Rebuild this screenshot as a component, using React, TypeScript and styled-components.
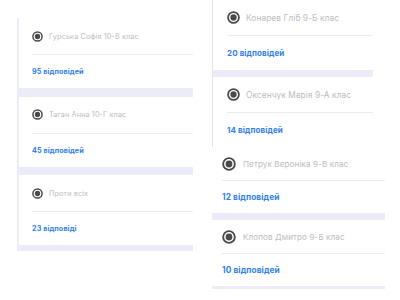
import React from "react";
import styled, { createGlobalStyle } from "styled-components";

const GlobalStyle = createGlobalStyle`
  html, body { margin: 0; padding: 0; background: #ffffff; }
  body { font-family: Inter, "Noto Sans", sans-serif; }
`;

const LAVENDER = "#ecebf8";

const Page = styled.div`
  width: 400px;
  height: 300px;
  overflow: hidden;
  display: flex;
  align-items: flex-start;
  background: #fff;
`;

const LeftColumn = styled.div`
  margin: 18px 0 0 17px;
  width: 176px;
  padding: 0 0 6px 2px;
  box-sizing: border-box;
  background: ${LAVENDER};
  display: flex;
  flex-direction: column;
  gap: 8.5px;
`;

const RightColumn = styled.div`
  margin: 0 0 0 19px;
  display: flex;
  flex-direction: column;
`;

const Panel = styled.div<{ $width: number; $pb: number; $border?: boolean }>`
  width: ${(p) => p.$width}px;
  box-sizing: border-box;
  background: ${LAVENDER};
  padding-bottom: ${(p) => p.$pb}px;
  border-left: ${(p) => (p.$border ? "1px solid #e2e1ea" : "none")};
  display: flex;
  flex-direction: column;
  gap: 7px;
`;

const Card = styled.div<{ $h: number; $inset: number }>`
  height: ${(p) => p.$h}px;
  background: #fff;
  padding-left: ${(p) => p.$inset}px;
  display: flex;
  flex-direction: column;
`;

const Header = styled.div<{ $h: number; $gap: number }>`
  height: ${(p) => p.$h}px;
  display: flex;
  align-items: center;
  gap: ${(p) => p.$gap}px;
`;

const Name = styled.span<{ $fs: number }>`
  font-size: ${(p) => p.$fs}px;
  color: #bcbcbc;
  white-space: nowrap;
  letter-spacing: 0.1px;
`;

const Divider = styled.div`
  height: 1px;
  background: #ebebeb;
`;

const Footer = styled.div`
  flex: 1;
  display: flex;
  align-items: center;
`;

const Count = styled.span<{ $fs: number }>`
  font-size: ${(p) => p.$fs}px;
  font-weight: 700;
  color: #2f7fe6;
  white-space: nowrap;
  letter-spacing: 0.1px;
`;

const Radio = ({ size }: { size: number }) => (
  <svg width={size} height={size} viewBox="0 0 12 12" style={{ flex: "none" }}>
    <circle cx="6" cy="6" r="5" fill="none" stroke="#4a4a4a" strokeWidth="1.6" />
    <circle cx="6" cy="6" r="2.9" fill="#4a4a4a" />
  </svg>
);

type Item = { name: string; count: string };

type Variant = {
  h: number;
  headerH: number;
  inset: number;
  radio: number;
  gap: number;
  nameFs: number;
  countFs: number;
};

const Option = ({ item, v }: { item: Item; v: Variant }) => (
  <Card $h={v.h} $inset={v.inset}>
    <Header $h={v.headerH} $gap={v.gap}>
      <Radio size={v.radio} />
      <Name $fs={v.nameFs}>{item.name}</Name>
    </Header>
    <Divider />
    <Footer>
      <Count $fs={v.countFs}>{item.count}</Count>
    </Footer>
  </Card>
);

const leftV: Variant = { h: 70, headerH: 36, inset: 13, radio: 11, gap: 6, nameFs: 7.3, countFs: 7.2 };
const rightTopV: Variant = { h: 70, headerH: 35, inset: 14, radio: 13, gap: 6, nameFs: 8.3, countFs: 8 };
const rightBottomV: Variant = { h: 66, headerH: 33, inset: 10, radio: 14, gap: 7, nameFs: 8.1, countFs: 8.3 };

const left: Item[] = [
  { name: "Гурська Софія 10-В клас", count: "95 відповідей" },
  { name: "Таган Анна 10-Г клас", count: "45 відповідей" },
  { name: "Проти всіх", count: "23 відповіді" },
];

const rightTop: Item[] = [
  { name: "Конарев Гліб 9-Б клас", count: "20 відповідей" },
  { name: "Оксенчук Марія 9-А клас", count: "14 відповідей" },
];

const rightBottom: Item[] = [
  { name: "Петрук Вероніка 9-В клас", count: "12 відповідей" },
  { name: "Клопов Дмитро 9-Б клас", count: "10 відповідей" },
];

export default function App() {
  return (
    <>
      <GlobalStyle />
      <Page>
        <LeftColumn>
          {left.map((it) => (
            <Option key={it.name} item={it} v={leftV} />
          ))}
        </LeftColumn>
        <RightColumn>
          <Panel $width={161} $pb={0} $border>
            {rightTop.map((it) => (
              <Option key={it.name} item={it} v={rightTopV} />
            ))}
          </Panel>
          <Panel $width={173} $pb={3}>
            {rightBottom.map((it) => (
              <Option key={it.name} item={it} v={rightBottomV} />
            ))}
          </Panel>
        </RightColumn>
      </Page>
    </>
  );
}
